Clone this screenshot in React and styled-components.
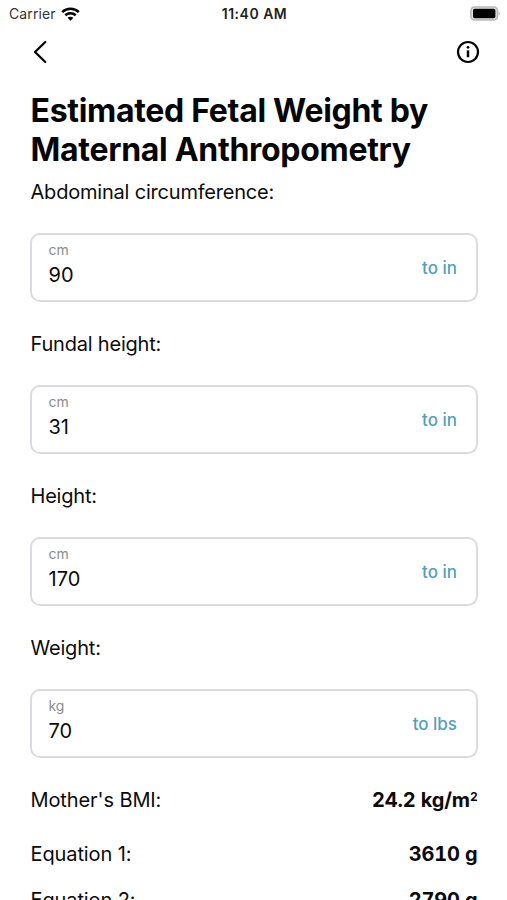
import React from 'react';
import styled, { createGlobalStyle } from 'styled-components';

const theme = {
  text: '#0b0b0c',
  black: '#050505',
  grey: '#8c8c8f',
  border: '#dadae3',
  blue: '#56a0b8',
};

const GlobalStyle = createGlobalStyle`
  *, *::before, *::after {
    box-sizing: border-box;
  }

  body {
    margin: 0;
    background-color: #fff;
    color: ${theme.text};
    font-family: Inter, 'Liberation Sans', sans-serif;
  }
`;

const Screen = styled.div`
  width: 100%;
  height: 900px;
  overflow: hidden;
`;

const StatusBar = styled.div`
  display: grid;
  grid-template-columns: 1fr auto 1fr;
  align-items: center;
  height: 27px;
  padding: 0 7px 0 9px;
  font-size: 14px;
  line-height: 27px;
`;

const Carrier = styled.div`
  display: flex;
  align-items: center;
  gap: 5px;
  color: #333;
  letter-spacing: 0.1px;
`;

const Time = styled.div`
  font-weight: 600;
  letter-spacing: 0.5px;
  color: #222;
`;

const Battery = styled.svg`
  justify-self: end;
`;

const TopBar = styled.header`
  display: flex;
  justify-content: space-between;
  align-items: center;
  height: 50px;
  padding: 0 27px 0 32px;
`;

const IconButton = styled.button`
  display: flex;
  padding: 0;
  border: 0;
  background: none;
  color: ${theme.black};
`;

const Content = styled.main`
  padding: 14px 29.5px 0 30px;
`;

const Title = styled.h1`
  margin: 0 0 11px;
  padding-left: 0.5px;
  font-size: 32px;
  font-weight: 700;
  line-height: 39px;
  letter-spacing: -0.3px;
  color: ${theme.black};
  white-space: nowrap;
`;

const Field = styled.div`
  margin-bottom: 30px;
`;

const Label = styled.label`
  display: block;
  padding-left: 0.5px;
  font-size: 20px;
  line-height: 24px;
  letter-spacing: -0.2px;
`;

const InputBox = styled.div`
  display: flex;
  justify-content: space-between;
  align-items: center;
  height: 69px;
  margin-top: 29px;
  padding: 0 18.5px 0 16.5px;
  border: 2px solid ${theme.border};
  border-radius: 10px;
`;

const InputColumn = styled.div`
  display: flex;
  flex-direction: column;
  padding-bottom: 4px;
`;

const Unit = styled.span`
  font-size: 14px;
  line-height: 18px;
  color: ${theme.grey};
`;

const Input = styled.input`
  width: 200px;
  height: 31px;
  padding: 0;
  border: 0;
  outline: 0;
  background: none;
  font: inherit;
  font-size: 20px;
  letter-spacing: 0;
  color: inherit;
`;

const ConvertButton = styled.button`
  padding: 0;
  border: 0;
  background: none;
  font-family: inherit;
  font-size: 17px;
  font-weight: 500;
  line-height: 22px;
  letter-spacing: 0;
  color: ${theme.blue};
`;

const Results = styled.div`
  display: flex;
  flex-direction: column;
`;

const Result = styled.div`
  display: flex;
  justify-content: space-between;
  height: 24px;
  padding-left: 0.5px;
  font-size: 20px;
  line-height: 24px;
  letter-spacing: -0.1px;

  & + & {
    margin-top: 22px;
  }

  &:first-child + & {
    margin-top: 30px;
  }
`;

const ResultValue = styled.strong`
  font-weight: 700;
  letter-spacing: -0.15px;
  font-variant-numeric: tabular-nums;

  sup {
    font-size: 12px;
    line-height: 0;
    vertical-align: 6px;
  }
`;

const fields = [
  { id: 'abdominal', label: 'Abdominal circumference:', unit: 'cm', value: '90', convert: 'to in' },
  { id: 'fundal', label: 'Fundal height:', unit: 'cm', value: '31', convert: 'to in' },
  { id: 'height', label: 'Height:', unit: 'cm', value: '170', convert: 'to in' },
  { id: 'weight', label: 'Weight:', unit: 'kg', value: '70', convert: 'to lbs' },
];

const results = [
  { label: "Mother's BMI:", value: '24.2 kg/m', power: '2' },
  { label: 'Equation 1:', value: '3610 g' },
  { label: 'Equation 2:', value: '2790 g' },
];

const App = () => {
  return (
    <Screen>
      <GlobalStyle />
      <StatusBar>
        <Carrier>
          Carrier
          <svg width="19" height="14" viewBox="0 0 19 14" fill="none" stroke="#000" strokeWidth="2.6">
            <path d="M1.2 5.1C5.9.7 13.1.7 17.8 5.1" />
            <path d="M4.3 8.3C7.2 5.6 11.8 5.6 14.7 8.3" />
            <path d="M9.5 13.7 6.6 10.8C8.1 9.4 10.9 9.4 12.4 10.8Z" fill="#000" stroke="none" />
          </svg>
        </Carrier>
        <Time>11:40 AM</Time>
        <Battery width="30" height="15" viewBox="0 0 30 15">
          <rect x="1" y="1" width="26.4" height="13" rx="3.5" fill="#e4e4e4" stroke="#b8b8b8" strokeWidth="1.6" />
          <rect x="3" y="2.8" width="22.4" height="9.4" rx="1.6" fill="#000" />
          <path d="M28.6 5.4C30.2 6.2 30.2 8.8 28.6 9.6Z" fill="#b8b8b8" />
        </Battery>
      </StatusBar>

      <TopBar>
        <IconButton aria-label="Back">
          <svg width="16" height="24" viewBox="0 0 16 24" fill="none" stroke="currentColor" strokeWidth="2.3" strokeLinecap="round" strokeLinejoin="round">
            <path d="M13.3 2 3 12 13.3 22" />
          </svg>
        </IconButton>
        <IconButton aria-label="Info">
          <svg width="24" height="24" viewBox="0 0 24 24" fill="none" stroke="currentColor">
            <circle cx="12" cy="12" r="10" strokeWidth="2.2" />
            <path d="M12 10.4V17.2" strokeWidth="2.5" />
            <circle cx="12" cy="7.3" r="1.4" fill="currentColor" stroke="none" />
          </svg>
        </IconButton>
      </TopBar>

      <Content>
        <Title>
          Estimated Fetal Weight by
          <br />
          Maternal Anthropometry
        </Title>

        {fields.map(({ id, label, unit, value, convert }) => (
          <Field key={id}>
            <Label htmlFor={id}>{label}</Label>
            <InputBox>
              <InputColumn>
                <Unit>{unit}</Unit>
                <Input id={id} defaultValue={value} />
              </InputColumn>
              <ConvertButton>{convert}</ConvertButton>
            </InputBox>
          </Field>
        ))}

        <Results>
          {results.map(({ label, value, power }) => (
            <Result key={label}>
              <span>{label}</span>
              <ResultValue>
                {value}
                {power && <sup>{power}</sup>}
              </ResultValue>
            </Result>
          ))}
        </Results>
      </Content>
    </Screen>
  );
};

export default App;
